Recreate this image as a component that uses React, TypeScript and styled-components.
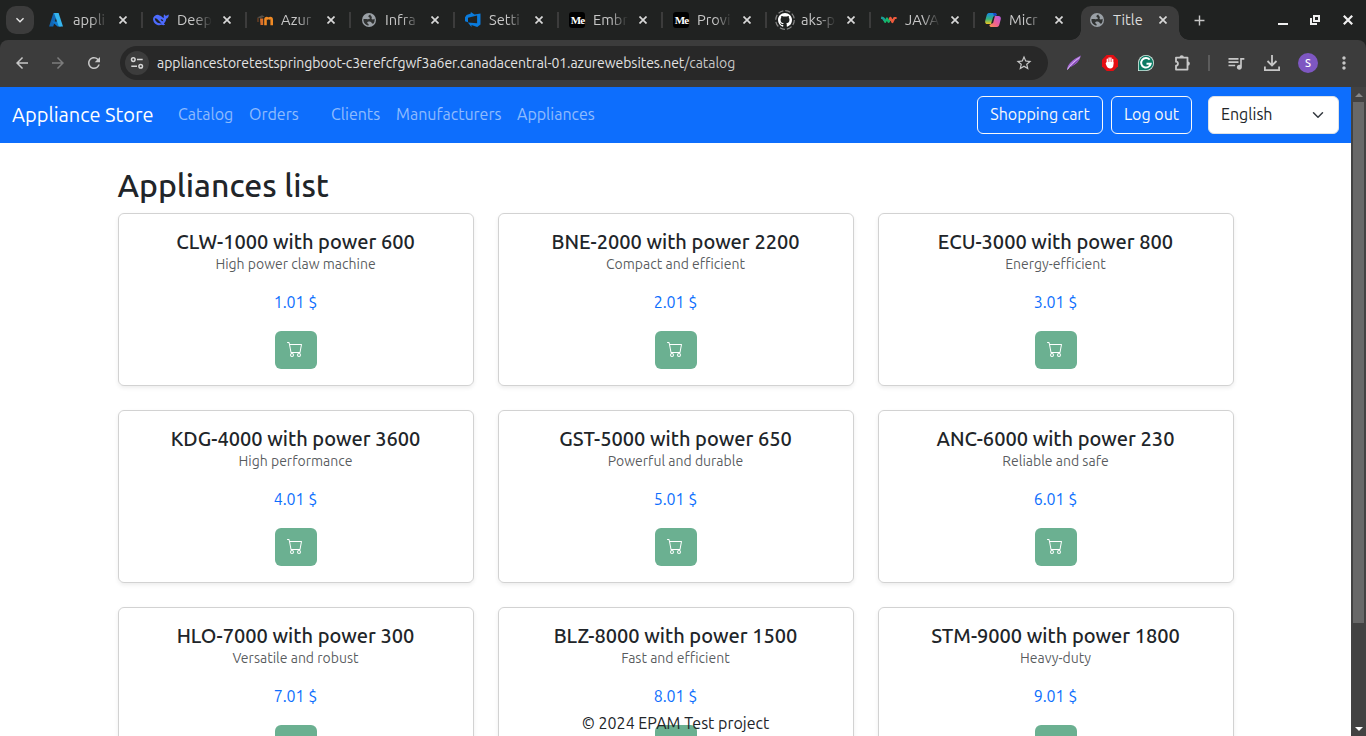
import React from "react";
import styled, { createGlobalStyle, css } from "styled-components";
import { BsCart, BsGithub } from "react-icons/bs";
import {
  MdArrowBack, MdArrowForward, MdRefresh, MdStarOutline,
  MdQueueMusic, MdMoreVert, MdAdd, MdKeyboardArrowDown,
} from "react-icons/md";

const Global = createGlobalStyle`
  *, *::before, *::after { box-sizing: border-box; }
  html, body { margin: 0; overflow: hidden; background: #fff; }
  body { font-family: Ubuntu, "Noto Sans", "Open Sans", sans-serif; font-size: 16px; line-height: 24px; color: #212529; }
  button { font: inherit; }
  h1, h2, p { margin: 0; font-weight: 400; }
`;

const Window = styled.div`
  display: flex;
  flex-direction: column;
  width: 1366px;
  height: 736px;
  overflow: hidden;
  background: #202221;
`;

/* ---------- tab strip ---------- */
const TabStrip = styled.div`
  display: flex;
  height: 40px;
  padding-left: 6px;
  flex: none;
`;
const TabSearch = styled.div`
  display: flex;
  align-items: center;
  justify-content: center;
  width: 28px;
  height: 28px;
  margin: 6px 4px 0 0;
  border-radius: 10px;
  background: #3c3c3c;
  color: #e8e8e8;
`;
const Tab = styled.div<{ $active?: boolean; $line?: boolean }>`
  display: flex;
  align-items: center;
  position: relative;
  width: ${(p) => (p.$active ? 98 : 104)}px;
  height: 40px;
  padding-left: ${(p) => (p.$active ? 8 : 11)}px;
  color: ${(p) => (p.$active ? "#dcdcdc" : "#c7c7c7")};
  ${(p) => p.$line && css`
    &::after {
      content: "";
      position: absolute;
      right: -1px;
      top: 12px;
      width: 2px;
      height: 16px;
      background: #3c3c3c;
    }
  `}
  ${(p) => p.$active && css`
    height: 34px;
    margin: 6px 0 0 3px;
    padding-bottom: 6px;
    border-radius: 10px 10px 0 0;
    background: #3c3c3c;
    &::before, &::after {
      content: "";
      position: absolute;
      bottom: 0;
      width: 10px;
      height: 10px;
    }
    &::before { left: -10px; background: radial-gradient(circle at 0 0, transparent 9.5px, #3c3c3c 10px); }
    &::after { right: -10px; background: radial-gradient(circle at 100% 0, transparent 9.5px, #3c3c3c 10px); }
  `}
`;
const Favicon = styled.span`
  display: flex;
  align-items: center;
  justify-content: center;
  width: 16px;
  height: 16px;
  flex: none;
`;
const TabTitle = styled.span<{ $fade?: boolean }>`
  width: 35px;
  margin-left: 8px;
  white-space: nowrap;
  font-size: 14.667px;
  line-height: 20px;
  ${(p) => p.$fade && css`mask-image: linear-gradient(90deg, #000 50%, transparent);`}
`;
const CloseMark = styled.span`
  display: flex;
  width: 8px;
  margin-left: 11px;
  color: #d8d8d8;
`;
const NewTab = styled.div`
  display: flex;
  align-items: center;
  justify-content: center;
  width: 40px;
  color: #c7c7c7;
`;
const WindowButtons = styled.div`
  display: flex;
  align-items: center;
  margin-left: auto;
  padding-right: 2px;
  color: #f0f0f0;
  svg { display: block; }
`;
const WindowButton = styled.span`
  display: flex;
  justify-content: center;
  width: 32.5px;
`;

/* ---------- toolbar ---------- */
const Toolbar = styled.div`
  display: flex;
  align-items: center;
  height: 47px;
  padding: 0 4px 1px;
  flex: none;
  border-radius: 8px 8px 0 0;
  background: #3c3c3c;
`;
const ToolButton = styled.span<{ $dim?: boolean }>`
  display: flex;
  align-items: center;
  justify-content: center;
  width: 36px;
  height: 34px;
  color: ${(p) => (p.$dim ? "#7c7c7c" : "#c7c7c7")};
`;
const Omnibox = styled.div`
  display: flex;
  align-items: center;
  width: 928px;
  height: 34px;
  margin: 0 8px;
  padding: 0 6px 0 5px;
  border-radius: 17px;
  background: #282828;
`;
const SiteInfo = styled.span`
  display: flex;
  align-items: center;
  justify-content: center;
  width: 24px;
  height: 24px;
  border-radius: 50%;
  background: #3c3c3c;
`;
const Url = styled.span`
  flex: 1;
  margin-left: 8px;
  font-size: 14px;
  letter-spacing: -0.057px;
  color: #e3e3e3;
  white-space: nowrap;
`;
const UrlPath = styled.span`
  color: #c7c7c7;
`;
const ToolDivider = styled.span`
  width: 2px;
  height: 16px;
  margin: 0 8px;
  background: #5c5c5c;
`;
const Avatar = styled.span`
  display: flex;
  align-items: center;
  justify-content: center;
  width: 20px;
  height: 20px;
  border-radius: 50%;
  background: #7e57c2;
  color: #fff;
  font-size: 11px;
  font-weight: 500;
`;

/* ---------- page ---------- */
const Viewport = styled.div`
  display: flex;
  flex: 1;
  min-height: 0;
`;
const Page = styled.div`
  position: relative;
  width: 1351px;
  overflow: hidden;
  background: #fff;
`;
const Navbar = styled.nav`
  display: flex;
  align-items: center;
  height: 56px;
  padding: 0 12px;
  background: #0d6efd;
`;
const Brand = styled.span`
  width: 158px;
  font-size: 20px;
  line-height: 30px;
  color: #fff;
  white-space: nowrap;
`;
const NavLink = styled.span<{ $w: number; $gap?: number }>`
  width: ${(p) => p.$w}px;
  margin-left: ${(p) => p.$gap ?? 0}px;
  padding: 0 0 2px 8px;
  color: rgba(255, 255, 255, 0.55);
  white-space: nowrap;
`;
const OutlineButton = styled.button<{ $w: number }>`
  width: ${(p) => p.$w}px;
  height: 38px;
  margin-right: 8px;
  padding: 0 0 2px;
  border: 1px solid #f8f9fa;
  border-radius: 6px;
  background: transparent;
  color: #f8f9fa;
  white-space: nowrap;
`;
const NavActions = styled.div`
  display: flex;
  margin-left: auto;
`;
const LanguageSelect = styled.div`
  display: flex;
  align-items: center;
  justify-content: space-between;
  width: 131px;
  height: 38px;
  margin-left: 8px;
  padding: 0 14px 0 12px;
  border: 1px solid #dee2e6;
  border-radius: 6px;
  background: #fff;
`;
const Language = styled.span`
  padding-bottom: 2px;
`;
const Container = styled.main`
  width: 1140px;
  margin: 0 auto;
  padding: 23px 12px 0;
`;
const Heading = styled.h1`
  margin-bottom: 9px;
  font-size: 32px;
  line-height: 38.4px;
  font-weight: 500;
`;
const Grid = styled.div`
  display: grid;
  grid-template-columns: repeat(3, 356px);
  gap: 24px;
`;
const Card = styled.article`
  display: flex;
  flex-direction: column;
  align-items: center;
  height: 173px;
  padding: 16px;
  border: 1px solid rgba(0, 0, 0, 0.175);
  border-radius: 6px;
  box-shadow: 0 2px 4px rgba(0, 0, 0, 0.075);
  white-space: nowrap;
`;
const CardTitle = styled.h2`
  font-size: 20px;
  line-height: 24px;
  font-weight: 500;
`;
const CardText = styled.p`
  margin-bottom: 15px;
  font-size: 14px;
  line-height: 21px;
  color: rgba(33, 37, 41, 0.75);
`;
const Price = styled.p`
  margin-bottom: 17px;
  color: #0d6efd;
`;
const CartButton = styled.button`
  display: flex;
  align-items: center;
  justify-content: center;
  width: 42px;
  height: 38px;
  padding: 0 1px 2px 0;
  border: 0;
  border-radius: 6px;
  background: #6bb091;
  color: #fff;
`;
const Footer = styled.footer`
  position: absolute;
  left: 0;
  right: 0;
  bottom: 1px;
  text-align: center;
`;
const Scrollbar = styled.div`
  display: flex;
  flex-direction: column;
  align-items: center;
  width: 15px;
  background: #424242;
`;
const ScrollArrow = styled.span`
  display: flex;
  align-items: center;
  justify-content: center;
  height: 15px;
`;
const Thumb = styled.div`
  width: 11px;
  height: 521px;
  margin-bottom: auto;
  background: #686868;
`;

const AzureIcon = () => (
  <svg width="16" height="16" viewBox="1 0 16 16">
    <path d="M5.400 1h4.200L5.200 14.600H1.100z" fill="#1267b4" />
    <path d="M3.800 9.500h7l2.400 5.100H9.500z" fill="#0f79d0" />
    <path d="M6 1h4.600L15 14.600h-4.200z" fill="#36b5ee" />
  </svg>
);
const WhaleIcon = () => (
  <svg width="16" height="16" viewBox="0 0 16 16">
    <path d="M0 7C.3 4.300 2.800 2.600 5.500 2.900L8 4c.8.900 1.800 1.500 3 1.900-.4-1.100-.5-2.600.2-3.700.5.900 1.200 1.600 2 1.500.8 0 1.600-.7 2.500-1.100.3 2.200-.8 3.700-2.500 4.200-.2 2.200-1.100 3.600-2.300 4.600l1.200 1.100c-1.100.9-2.300.8-3.400.3C4.600 14.400.3 11.700 0 7z" fill="#4d6bfe" />
    <path d="M1.800 6.300c2.700-.4 4.200 3.200 6.800 5.200-3.500.2-6.500-1.800-6.800-5.200zM7.600 7.300c1.400-.4 2.500.4 2.700 1.900-1.200.2-2.300-.6-2.700-1.900z" fill="#202221" />
  </svg>
);
const MoodleIcon = () => (
  <svg width="16" height="16" viewBox="0 0 16 16">
    <path d="M0 5.400 5 3.200l2.700 1.300-4.300 1.700z" fill="#55504a" />
    <path d="M1 6v4" stroke="#8a4a22" strokeWidth="1" />
    <path d="M3 6.500h3.200v6.600H3.500z" fill="#d9702a" />
    <path d="M8.500 13.200V7.600c0-2 2.700-2 3 0v-.2c.4-2 3.200-2 3.200.3v5.500" fill="none" stroke="#f08a24" strokeWidth="2.600" />
    <path d="M11.600 7.500v5.700" stroke="#202221" strokeWidth=".9" />
  </svg>
);
const DevOpsIcon = () => (
  <svg width="16" height="16" viewBox="0 0 16 16">
    <path d="M0 5.300 1.600 3.100 5.800 1.400V0l3.700 2.500L15.500 1.500v11L12.200 15 6.500 13.100V15L2.800 10.500l9.300.8V3.600L3 5.800v4.400L0 9.200z" fill="#0a7bdc" />
  </svg>
);
const MediumBadge = styled.span`
  width: 16px;
  height: 16px;
  padding-left: 1px;
  border-radius: 3px;
  background: #000;
  color: #fff;
  font: bold 11px/16px "Liberation Serif", serif;
  letter-spacing: -0.9px;
  text-align: center;
`;
const GithubIcon = () => (
  <svg width="20" height="20" viewBox="0 0 20 20" overflow="visible">
    <circle cx="10" cy="10" r="9.300" fill="none" stroke="#858585" strokeWidth="1.200" strokeDasharray="5.300 2" />
    <g color="#fff" transform="translate(3 3)"><BsGithub size={14} /></g>
  </svg>
);
const WaveIcon = () => (
  <svg width="16" height="16" viewBox="0 0 16 16" fill="none" strokeWidth="2.200" strokeLinejoin="round">
    <path d="m7.600 9.800 1.800-4 2 4.200 1.900-4h2.300" stroke="#ef5a3c" />
    <path d="M.3 5.600 2.500 6.500l1.700 3.300L6 6.500l1.600 3.300.8-1.800" stroke="#14b86a" />
    <path d="m.3 5.600 2.200.9 1 2" stroke="#1a9b9b" />
  </svg>
);
const CopilotIcon = () => (
  <svg width="16" height="16" viewBox="0 0 16 16">
    <defs>
      <linearGradient id="cpA" x1="0" y1="0" x2="0" y2="1"><stop offset="0" stopColor="#1689e6" /><stop offset=".55" stopColor="#36b27c" /><stop offset="1" stopColor="#f4c51c" /></linearGradient>
      <linearGradient id="cpB" x1="1" y1="0" x2="0" y2="1"><stop offset="0" stopColor="#b25be6" /><stop offset=".55" stopColor="#f05f91" /><stop offset="1" stopColor="#f9974c" /></linearGradient>
    </defs>
    <path d="M4 1h6c1 0 1.400.700 1.700 2L9 4.500 7.300 10c-.5 1.500-1 2-2.300 2H2.500C.5 12-.2 10.500.3 8.500l1.300-5C2 2 2.700 1 4 1z" fill="url(#cpA)" />
    <path d="M8 1h2c1 0 1.500.8 1.800 2.200L9 4z" fill="#1747c8" />
    <path d="M12 15H6c-1 0-1.400-.7-1.700-2L7 11.500 8.700 6c.5-1.500 1-2 2.300-2h2.500c2 0 2.700 1.500 2.200 3.500l-1.300 5C14 14 13.300 15 12 15z" fill="url(#cpB)" />
    <path d="M8.300 4.500h1.500L8 11.300H6.200z" fill="#222" />
  </svg>
);
const GlobeIcon = () => (
  <svg width="14" height="14" viewBox="0 0 14 14">
    <circle cx="7" cy="7" r="7" fill="#9aa0a6" />
    <path d="M8.200 1.400c-1.300.5-2 1.200-1.800 2.200.2.800 1.300.6 1.400 1.500 0 .9-.6 1.100-1.700 1.100-1.300 0-2-.2-3.300-.2H1.500c-.3 2 .4 3.800 1.700 5 1.300 1.200 2.600 1.500 3.400 1.500V11c-1-.2-1.500-.8-1.300-1.700.2-.7.900-.9 2.200-.9 1.400 0 1.900.8 2.200 1.700.2.500.7.600 1.500.6 1.300-1.400 1.700-3.200 1.300-5-.8.800-1.600.9-2.300.5-.8-.5-.7-1.200-.4-1.800.3-.5 0-.9-.7-1.200z" fill="#303231" />
  </svg>
);
const CloseIcon = () => (
  <svg width="8" height="8" viewBox="0 0 8 8" stroke="currentColor" strokeWidth="1.700">
    <path d="m.5.5 7 7M7.500.5l-7 7" />
  </svg>
);
const SiteInfoIcon = () => (
  <svg width="14" height="14" viewBox="0 0 14 14" fill="none" stroke="#d5d5d5" strokeWidth="1.500">
    <circle cx="3.300" cy="3.600" r="1.800" /><path d="M7 3.600h5.700M1.300 10.300H7" /><circle cx="10.700" cy="10.300" r="1.800" />
  </svg>
);
const FeatherIcon = () => (
  <svg width="18" height="18" viewBox="0 0 18 18">
    <path d="M2 16C2.500 10 7 6 15.800 1.500 15 6.500 11 11 5 13z" fill="#a566d6" />
    <path d="M2.500 15.500C5 11 9 7.500 14.500 3.500" fill="none" stroke="#dcc0f2" strokeWidth="1" />
    <path d="M6.500 12.200 13.500 6" fill="none" stroke="#6b3c96" strokeWidth=".8" />
  </svg>
);
const AdblockIcon = () => (
  <svg width="16" height="16" viewBox="0 0 16 16">
    <path d="M4.700 0h6.600L16 4.700v6.600L11.300 16H4.700L0 11.300V4.700z" fill="#e40d12" />
    <path d="M5.300 8V4.200M7.100 8V2.900M8.900 8V2.900M10.700 9V4.400" stroke="#fff" strokeWidth="1.300" strokeLinecap="round" />
    <path d="M4.600 7h6.800v3c0 2.300-1.200 3.500-3.200 3.500-1.900 0-2.900-.9-3.600-2.500L3.600 8.500z" fill="#fff" />
  </svg>
);
const GrammarlyIcon = () => (
  <svg width="16" height="16" viewBox="0 0 16 16">
    <path d="M0 16V8a8 8 0 1 1 8 8z" fill="#d5e8e2" />
    <path d="M.8 15.200V8A7.200 7.200 0 1 1 8 15.200z" fill="#0c7a63" />
    <path d="M11.700 4.700A4.800 4.800 0 1 0 12.700 8.700H8.500" fill="none" stroke="#fff" strokeWidth="1.900" />
  </svg>
);
const PuzzleIcon = () => (
  <svg width="18" height="18" viewBox="0 0 18 18">
    <path d="M3 3.600h11.500v12H3v-3.900c2.600-.2 2.600-3.800 0-4z" fill="none" stroke="currentColor" strokeWidth="1.800" strokeLinejoin="round" />
    <path d="M6.500 3.400a2.200 2.200 0 0 1 4.400 0zM14.700 7.400a2.200 2.200 0 0 1 0 4.400z" fill="currentColor" />
  </svg>
);
const DownloadIcon = () => (
  <svg width="16" height="16" viewBox="0 0 16 16" fill="none" stroke="currentColor" strokeWidth="1.800">
    <path d="M8 0v10M3.500 6 8 10.500 12.500 6M.9 11.500v3.600h14.200v-3.600" />
  </svg>
);
const RestoreIcon = () => (
  <svg width="10" height="10" viewBox="0 0 10 10" fill="none" stroke="currentColor" strokeWidth="2">
    <path d="M4 1h5v5H4zM1 3v6h6" />
  </svg>
);
const SelectChevron = () => (
  <svg width="12" height="12" viewBox="0 0 16 16" fill="none" stroke="#343a40" strokeWidth="2" strokeLinecap="round" strokeLinejoin="round">
    <path d="m2 5 6 6 6-6" />
  </svg>
);

const tabs: { title: string; icon: React.ReactNode }[] = [
  { title: "appli", icon: <AzureIcon /> },
  { title: "Deep", icon: <WhaleIcon /> },
  { title: "Azur", icon: <MoodleIcon /> },
  { title: "Infra", icon: <GlobeIcon /> },
  { title: "Setti", icon: <DevOpsIcon /> },
  { title: "Embr", icon: <MediumBadge>Me</MediumBadge> },
  { title: "Provi", icon: <MediumBadge>Me</MediumBadge> },
  { title: "aks-p", icon: <GithubIcon /> },
  { title: "JAVA", icon: <WaveIcon /> },
  { title: "Micr", icon: <CopilotIcon /> },
];

const appliances = [
  ["CLW-1000 with power 600", "High power claw machine", "1.01 $"],
  ["BNE-2000 with power 2200", "Compact and efficient", "2.01 $"],
  ["ECU-3000 with power 800", "Energy-efficient", "3.01 $"],
  ["KDG-4000 with power 3600", "High performance", "4.01 $"],
  ["GST-5000 with power 650", "Powerful and durable", "5.01 $"],
  ["ANC-6000 with power 230", "Reliable and safe", "6.01 $"],
  ["HLO-7000 with power 300", "Versatile and robust", "7.01 $"],
  ["BLZ-8000 with power 1500", "Fast and efficient", "8.01 $"],
  ["STM-9000 with power 1800", "Heavy-duty", "9.01 $"],
];

export default function App() {
  return (
    <Window>
      <Global />
      <TabStrip>
        <TabSearch><MdKeyboardArrowDown size={16} /></TabSearch>
        {tabs.map((t, i) => (
          <Tab key={i} $line={i < tabs.length - 1}>
            <Favicon>{t.icon}</Favicon>
            <TabTitle $fade>{t.title}</TabTitle>
            <CloseMark><CloseIcon /></CloseMark>
          </Tab>
        ))}
        <Tab $active>
          <Favicon><GlobeIcon /></Favicon>
          <TabTitle>Title</TabTitle>
          <CloseMark><CloseIcon /></CloseMark>
        </Tab>
        <NewTab><MdAdd size={17} /></NewTab>
        <WindowButtons>
          <WindowButton>
            <svg width="10" height="10"><path d="M0 8h10v2H0z" fill="currentColor" /></svg>
          </WindowButton>
          <WindowButton><RestoreIcon /></WindowButton>
          <WindowButton>
            <svg width="10" height="10" stroke="currentColor" strokeWidth="2.200"><path d="m.8.8 8.400 8.400M9.200.8.8 9.200" /></svg>
          </WindowButton>
        </WindowButtons>
      </TabStrip>
      <Toolbar>
        <ToolButton><MdArrowBack size={18} /></ToolButton>
        <ToolButton $dim><MdArrowForward size={18} /></ToolButton>
        <ToolButton><MdRefresh size={18} /></ToolButton>
        <Omnibox>
          <SiteInfo><SiteInfoIcon /></SiteInfo>
          <Url>appliancestoretestspringboot-c3erefcfgwf3a6er.canadacentral-01.azurewebsites.net<UrlPath>/catalog</UrlPath></Url>
          <ToolButton><MdStarOutline size={18} /></ToolButton>
        </Omnibox>
        <ToolButton><FeatherIcon /></ToolButton>
        <ToolButton><AdblockIcon /></ToolButton>
        <ToolButton><GrammarlyIcon /></ToolButton>
        <ToolButton><PuzzleIcon /></ToolButton>
        <ToolDivider />
        <ToolButton><MdQueueMusic size={20} /></ToolButton>
        <ToolButton><DownloadIcon /></ToolButton>
        <ToolButton><Avatar>S</Avatar></ToolButton>
        <ToolButton><MdMoreVert size={20} /></ToolButton>
      </Toolbar>
      <Viewport>
        <Page>
          <Navbar>
            <Brand>Appliance Store</Brand>
            <NavLink $w={71}>Catalog</NavLink>
            <NavLink $w={66}>Orders</NavLink>
            <NavLink $w={65} $gap={16}>Clients</NavLink>
            <NavLink $w={121}>Manufacturers</NavLink>
            <NavLink $w={94}>Appliances</NavLink>
            <NavActions>
              <OutlineButton $w={126}>Shopping cart</OutlineButton>
              <OutlineButton $w={81}>Log out</OutlineButton>
              <LanguageSelect><Language>English</Language><SelectChevron /></LanguageSelect>
            </NavActions>
          </Navbar>
          <Container>
            <Heading>Appliances list</Heading>
            <Grid>
              {appliances.map(([name, text, price]) => (
                <Card key={name}>
                  <CardTitle>{name}</CardTitle>
                  <CardText>{text}</CardText>
                  <Price>{price}</Price>
                  <CartButton><BsCart size={16} /></CartButton>
                </Card>
              ))}
            </Grid>
          </Container>
          <Footer>© 2024 EPAM Test project</Footer>
        </Page>
        <Scrollbar>
          <ScrollArrow><svg width="8" height="4"><path d="M4 0 8 4H0z" fill="#868686" /></svg></ScrollArrow>
          <Thumb />
          <ScrollArrow><svg width="8" height="4"><path d="M0 0h8L4 4z" fill="#fff" /></svg></ScrollArrow>
        </Scrollbar>
      </Viewport>
    </Window>
  );
}
